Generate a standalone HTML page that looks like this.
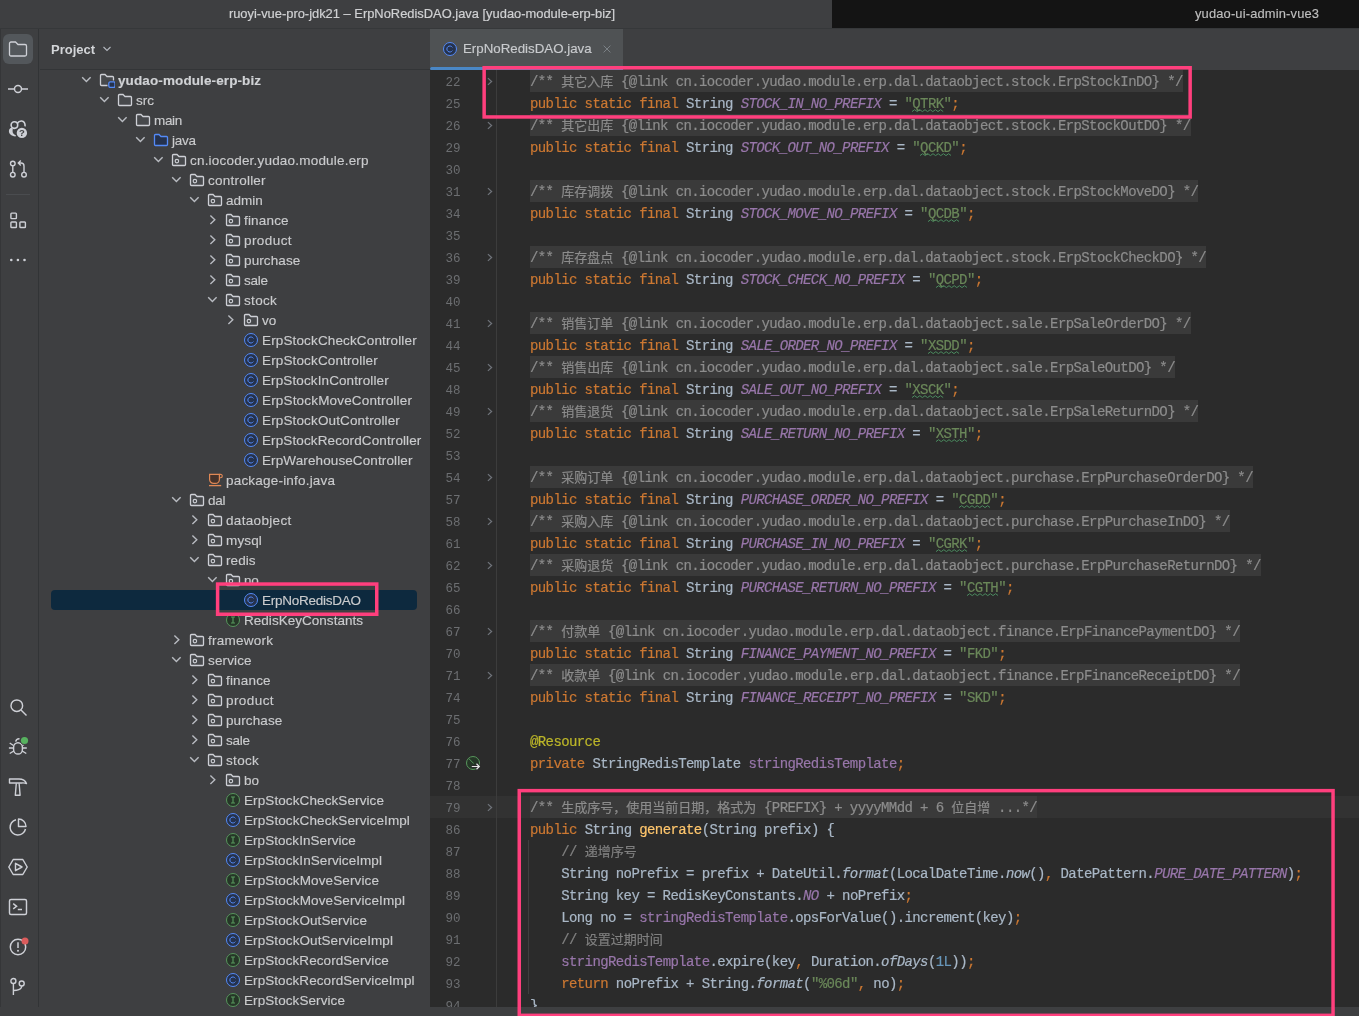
<!DOCTYPE html>
<html lang="zh">
<head>
<meta charset="utf-8">
<title>ruoyi-vue-pro-jdk21 – ErpNoRedisDAO.java</title>
<style>
html,body{margin:0;padding:0;}
body{width:1359px;height:1016px;overflow:hidden;background:#3e3f41;position:relative;
 font-family:"Liberation Sans","Noto Sans CJK SC",sans-serif;font-size:13px;color:#c3c5c8;}
#titlebar{position:absolute;left:0;top:0;width:1359px;height:28px;background:#3e3f41;border-bottom:1px solid #36383a;box-sizing:content-box;}
#t1{position:absolute;left:0;top:0;width:832px;height:28px;line-height:28px;text-align:center;color:#d0d1d3;font-size:12.9px;-webkit-text-stroke:0.2px;text-indent:12px;}
#t2{position:absolute;left:832px;top:0;width:527px;height:28px;line-height:28px;background:#141414;color:#bfbfbf;font-size:12.9px;letter-spacing:0.16px;-webkit-text-stroke:0.15px;}
#t2 span{position:absolute;left:363px;top:0;}
#strip{position:absolute;left:0;top:29px;width:38px;height:978px;background:#3e3f41;border-right:1px solid #323436;}
#strip .selbg{position:absolute;left:3px;top:5px;width:30px;height:30px;border-radius:6px;background:#53575b;}
#strip svg{position:absolute;left:8px;overflow:visible;}
#strip .sep{position:absolute;left:6px;top:165px;width:24px;height:1px;background:#4a4c4f;}
#proj{position:absolute;left:40px;top:29px;width:390px;height:978px;background:#3e3f41;overflow:hidden;}
#phead{position:absolute;left:0;top:0;width:390px;height:40px;border-bottom:1px solid #333537;}
#phead b{position:absolute;left:11px;top:1px;line-height:40px;font-size:13px;color:#d3d5d8;font-weight:bold;}
#phead svg{position:absolute;left:62px;top:15px;}
.row{position:absolute;left:0;width:390px;height:20px;}
#tree{will-change:transform;position:absolute;left:0;top:-29px;width:390px;height:1016px;}
.row.sel:before{content:"";position:absolute;left:11px;top:0;width:366px;height:20px;border-radius:4px;background:#0d293e;}
.row svg.ar{position:absolute;top:4px;}
.row svg.ic{position:absolute;top:2px;}
.row .tl{-webkit-text-stroke:0.15px;position:absolute;top:1px;line-height:20px;white-space:nowrap;color:#cacbcd;font-size:13.5px;}
.row .tl.b{font-weight:bold;color:#d0d2d5;}
#editor{position:absolute;left:430px;top:29px;width:929px;height:978px;background:#2b2b2b;overflow:hidden;}
#tabbar{position:absolute;left:0;top:0;width:929px;height:41px;background:#3e3f41;}
#tab{position:absolute;left:0;top:0;width:193px;height:38px;background:#4f5254;}
#tab .ul{position:absolute;left:0;top:38px;width:193px;border-radius:1.5px 0 0 1.5px;height:3px;background:#4a88c7;}
#tab span{position:absolute;left:33px;top:0;line-height:40px;color:#c9cbce;font-size:13.3px;-webkit-text-stroke:0.15px;}
#tab svg.ci{position:absolute;left:12px;top:12px;}
#tab svg.x{position:absolute;left:172.4px;top:15.1px;}
#gsep{position:absolute;left:66px;top:41px;width:1px;height:940px;background:#3c3c3c;}
#code{will-change:transform;position:absolute;left:0;top:-29px;width:929px;height:1016px;font-family:"Liberation Mono","Noto Sans CJK SC",monospace;font-size:14px;letter-spacing:-0.6px;color:#a9b7c6;}
.z{font-size:13px;letter-spacing:0;}
.ln{position:absolute;left:0;width:929px;height:22px;line-height:24px;white-space:pre;}
.ln.cur{background:#323232;}
.ln .no{position:absolute;left:0;top:0;width:30.5px;text-align:right;color:#6c6e71;font-size:12.5px;letter-spacing:0;line-height:26px;}
.ln .fa{position:absolute;left:56px;top:6px;}
.ln .gi{position:absolute;left:35px;top:3px;}
.ln .cd{position:absolute;left:100px;top:0;-webkit-text-stroke:0.2px;}
.k{color:#cc7832}.f{color:#9876aa;font-style:italic}.fi{color:#9876aa}.s{color:#6a8759}
.s u{text-decoration:none;position:relative;}
.s u svg.wv{position:absolute;left:0;top:13px;}
.fd{color:#8c8c8c;background:#3a3a3a;display:inline-block;height:22px;vertical-align:top;}
.c{color:#808080}.an{color:#bbb529}.m{color:#ffc66d}.n{color:#6897bb}
.ig{position:absolute;left:98px;top:840px;width:1px;height:154px;background:#3f3f3f;}
#bottom{position:absolute;left:0;top:1007px;width:1359px;height:9px;background:#3e3f41;}
#boxes{position:absolute;left:0;top:0;}
#t1,#t2 span,#phead b,#tab span,#strip svg{will-change:transform;}
#ledge{position:absolute;left:0;top:29px;width:1px;height:978px;background:#353638;}
</style>
</head>
<body>
<svg width="0" height="0" style="position:absolute">
<defs>
<path id="ao" d="M2.2 3.2 L6.4 7.6 L10.6 3.2" fill="none" stroke="#b8bbc1" stroke-width="1.4"/>
<path id="ac" d="M4.4 1.5 L8.8 5.7 L4.4 9.9" fill="none" stroke="#b8bbc1" stroke-width="1.4"/>
<g id="i-fld"><path d="M1.5 3.5 a1 1 0 0 1 1 -1 H6 L8 4.5 H13.5 a1 1 0 0 1 1 1 V12.5 a1 1 0 0 1 -1 1 H2.5 a1 1 0 0 1 -1 -1 Z" fill="#47494c" stroke="#ced0d6" stroke-width="1.3"/></g>
<g id="i-src"><path d="M1.5 3.5 a1 1 0 0 1 1 -1 H6 L8 4.5 H13.5 a1 1 0 0 1 1 1 V12.5 a1 1 0 0 1 -1 1 H2.5 a1 1 0 0 1 -1 -1 Z" fill="#25324d" stroke="#548af7" stroke-width="1.3"/></g>
<g id="i-pkg"><path d="M1.5 3.5 a1 1 0 0 1 1 -1 H6 L8 4.5 H13.5 a1 1 0 0 1 1 1 V12.5 a1 1 0 0 1 -1 1 H2.5 a1 1 0 0 1 -1 -1 Z" fill="#47494c" stroke="#ced0d6" stroke-width="1.3"/><circle cx="5.9" cy="9.1" r="1.75" fill="none" stroke="#ced0d6" stroke-width="1.15"/></g>
<g id="i-mod"><path d="M1.5 3.5 a1 1 0 0 1 1 -1 H6 L8 4.5 H13.5 a1 1 0 0 1 1 1 V12.5 a1 1 0 0 1 -1 1 H2.5 a1 1 0 0 1 -1 -1 Z" fill="#47494c" stroke="#ced0d6" stroke-width="1.3"/><rect x="8.5" y="8.5" width="8" height="7" fill="#3e3f41"/><rect x="9.800" y="9.900" width="6.200" height="5.500" rx="1.300" fill="#25324d" stroke="#548af7" stroke-width="1.3"/></g>
<g id="i-C"><circle cx="8" cy="8" r="6.5" fill="#25324d" stroke="#548af7" stroke-width="1"/><path d="M10.4 9.6 A3 3 0 1 1 10.4 6.4" fill="none" stroke="#548af7" stroke-width="1"/></g>
<g id="i-I"><circle cx="8" cy="8" r="6.5" fill="#253627" stroke="#57965c" stroke-width="1"/><path d="M6 5 H10 M6 11 H10 M8 5 V11" fill="none" stroke="#57965c" stroke-width="1.2"/></g>
<g id="i-java"><path d="M2.6 2.4 H12.4 V7.4 a4 4 0 0 1 -4 4 H6.6 a4 4 0 0 1 -4 -4 Z" fill="#45332b" stroke="#e08855" stroke-width="1.2"/><path d="M12.4 2.4 H13.6 a1.7 1.7 0 0 1 0 3.4 H12.6" fill="none" stroke="#e08855" stroke-width="1.1"/><path d="M2 13.6 H14.2" stroke="#e08855" stroke-width="1.3"/></g>
</defs>
</svg>

<div id="titlebar">
 <div id="t1">ruoyi-vue-pro-jdk21 – ErpNoRedisDAO.java [yudao-module-erp-biz]</div>
 <div id="t2"><span>yudao-ui-admin-vue3</span></div>
</div>

<div id="strip">
 <div class="selbg"></div>
 <!-- project folder -->
 <svg style="top:10px" width="20" height="20" viewBox="0 0 20 20"><path d="M1.5 4.5 a1.5 1.5 0 0 1 1.5 -1.5 H7.5 L10 5.5 H17 a1.5 1.5 0 0 1 1.500 1.5 V15.500 a1.500 1.500 0 0 1 -1.500 1.500 H3 a1.500 1.500 0 0 1 -1.500 -1.500 Z" fill="none" stroke="#ced0d6" stroke-width="1.3"/></svg>
 <!-- commit -->
 <svg style="top:50px" width="20" height="20" viewBox="0 0 20 20"><path d="M0 10 H6.400 M13.600 10 H20" stroke="#ced0d6" stroke-width="1.45"/><circle cx="10" cy="10" r="3.500" fill="none" stroke="#ced0d6" stroke-width="1.45"/></svg>
 <!-- copilot-ish -->
 <svg style="top:90px" width="22" height="22" viewBox="0 0 22 22"><circle cx="6.4" cy="6.1" r="3.3" fill="none" stroke="#ced0d6" stroke-width="1.6"/><path d="M9.4 4.2 C10.5 2.5 12.2 1.9 13.6 2 C16 2.200 17.2 4.3 17.1 7.4" fill="none" stroke="#ced0d6" stroke-width="1.6"/><path d="M3.4 8.6 C-0.6 10.5 -0.2 16.3 7.6 17.6 L7.9 16.2 C4.7 15.2 4.2 13 4.8 9.9 Z" fill="#ced0d6"/><circle cx="13.9" cy="13.9" r="5.9" fill="#3e3f41"/><circle cx="13.9" cy="13.9" r="5.2" fill="#ced0d6"/><text x="13.9" y="17.3" font-family="Liberation Sans,sans-serif" font-weight="bold" font-size="9.5" text-anchor="middle" fill="#3e3f41">?</text></svg>
 <!-- pull requests -->
 <svg style="top:130px" width="20" height="20" viewBox="0 0 20 20"><circle cx="4.800" cy="4.500" r="2.300" fill="none" stroke="#ced0d6" stroke-width="1.4"/><circle cx="4.800" cy="15.700" r="2.300" fill="none" stroke="#ced0d6" stroke-width="1.4"/><circle cx="16" cy="15.700" r="2.300" fill="none" stroke="#ced0d6" stroke-width="1.4"/><path d="M4.800 6.800 V13.400 M16 13.400 V7 a3 3 0 0 0 -3 -3 H10.500 M12.800 1.500 L10.300 4 L12.800 6.500" fill="none" stroke="#ced0d6" stroke-width="1.4"/></svg>
 <div class="sep"></div>
 <!-- structure -->
 <svg style="top:181px" width="20" height="20" viewBox="0 0 20 20"><rect x="2.900" y="3.100" width="5.500" height="5.500" rx="0.800" fill="none" stroke="#ced0d6" stroke-width="1.4"/><rect x="2.900" y="12" width="5.500" height="5.500" rx="0.800" fill="none" stroke="#ced0d6" stroke-width="1.4"/><rect x="11.900" y="12" width="5.500" height="5.500" rx="0.800" fill="none" stroke="#ced0d6" stroke-width="1.4"/></svg>
 <!-- more -->
 <svg style="top:221px" width="20" height="20" viewBox="0 0 20 20"><circle cx="3.300" cy="10" r="1.300" fill="#ced0d6"/><circle cx="9.900" cy="10" r="1.300" fill="#ced0d6"/><circle cx="16.500" cy="10" r="1.300" fill="#ced0d6"/></svg>
 <!-- search -->
 <svg style="top:668px" width="20" height="20" viewBox="0 0 20 20"><circle cx="8.800" cy="8.700" r="5.800" fill="none" stroke="#ced0d6" stroke-width="1.45"/><path d="M13 13 L18.500 18.500" stroke="#ced0d6" stroke-width="1.45"/></svg>
 <!-- debug -->
 <svg style="top:708px" width="20" height="20" viewBox="0 0 20 20"><path d="M5.600 10.200 a4.400 4.400 0 0 1 8.800 0 V12.700 a4.400 4.400 0 0 1 -8.800 0 Z" fill="none" stroke="#ced0d6" stroke-width="1.45"/><path d="M7.700 4.700 a3.600 3.600 0 0 1 3.800 -2.900" fill="none" stroke="#ced0d6" stroke-width="1.45"/><path d="M0.900 10.900 H5.300 M14.700 10.900 H18.800 M1.700 6 L5.500 8.500 M1.700 16.500 L5.800 14 M18.300 16.500 L14.200 14 M18 6.200 L14.500 8.500" stroke="#ced0d6" stroke-width="1.45" fill="none"/><circle cx="16.500" cy="3.500" r="4.500" fill="#3e3f41"/><circle cx="16.500" cy="3.500" r="3.600" fill="#57b25f"/></svg>
 <!-- build hammer -->
 <svg style="top:748px" width="20" height="20" viewBox="0 0 20 20"><path d="M1.500 2 H11 C14.800 2 17.400 3.800 18.500 6.600 C16.400 5.500 14.600 6 12.400 6 H1.500 Z" fill="none" stroke="#ced0d6" stroke-width="1.4" stroke-linejoin="round"/><path d="M8.300 6.200 L7.300 18.200 H12.100 L11.100 6.200" fill="none" stroke="#ced0d6" stroke-width="1.4" stroke-linejoin="round"/></svg>
 <!-- profiler pie -->
 <svg style="top:788px" width="20" height="20" viewBox="0 0 20 20"><path d="M8 2.700 A7.800 7.800 0 1 0 17.500 12 " fill="none" stroke="#ced0d6" stroke-width="1.45"/><path d="M10.500 2 A7.500 7.500 0 0 1 18 9.500 H10.500 Z" fill="none" stroke="#ced0d6" stroke-width="1.45" stroke-linejoin="round"/></svg>
 <!-- services -->
 <svg style="top:828px" width="20" height="20" viewBox="0 0 20 20"><path d="M5.200 2.500 H14.800 L19.200 10 L14.800 17.500 H5.200 L0.800 10 Z" fill="none" stroke="#ced0d6" stroke-width="1.45" stroke-linejoin="round"/><path d="M7.500 6.300 L14 10 L7.500 13.700 Z" fill="none" stroke="#ced0d6" stroke-width="1.45" stroke-linejoin="round"/></svg>
 <!-- terminal -->
 <svg style="top:868px" width="20" height="20" viewBox="0 0 20 20"><rect x="1.500" y="2.500" width="17" height="15" rx="1.500" fill="none" stroke="#ced0d6" stroke-width="1.45"/><path d="M5.200 6.700 L8.600 9.300 L5.200 11.900 M9.800 12.500 H14" fill="none" stroke="#ced0d6" stroke-width="1.45"/></svg>
 <!-- problems -->
 <svg style="top:908px" width="20" height="20" viewBox="0 0 20 20"><circle cx="10" cy="10" r="7.700" fill="none" stroke="#ced0d6" stroke-width="1.45"/><path d="M10 5.300 V11" stroke="#ced0d6" stroke-width="1.500"/><circle cx="10" cy="13.800" r="1" fill="#ced0d6"/><circle cx="17" cy="4" r="3.500" fill="#db5c5c"/></svg>
 <!-- git -->
 <svg style="top:948px" width="20" height="20" viewBox="0 0 20 20"><circle cx="5.400" cy="4" r="2.500" fill="none" stroke="#ced0d6" stroke-width="1.4"/><circle cx="13.700" cy="6.500" r="2.500" fill="none" stroke="#ced0d6" stroke-width="1.4"/><path d="M5.400 6.500 V18 M13.700 9 C13.700 12.500 9 13.500 5.400 13.500" fill="none" stroke="#ced0d6" stroke-width="1.4"/></svg>
</div>

<div id="proj">
 <div id="tree">
<div class="row" style="top:70px"><svg class="ar" style="left:40px" width="12" height="12" viewBox="0 0 12 12"><use href="#ao"/></svg><svg class="ic" style="left:59px" width="16" height="16" viewBox="0 0 16 16"><use href="#i-mod"/></svg><span class="tl b" style="left:78px;letter-spacing:0.11px">yudao-module-erp-biz</span></div>
<div class="row" style="top:90px"><svg class="ar" style="left:58px" width="12" height="12" viewBox="0 0 12 12"><use href="#ao"/></svg><svg class="ic" style="left:77px" width="16" height="16" viewBox="0 0 16 16"><use href="#i-fld"/></svg><span class="tl" style="left:96px;letter-spacing:0.00px">src</span></div>
<div class="row" style="top:110px"><svg class="ar" style="left:76px" width="12" height="12" viewBox="0 0 12 12"><use href="#ao"/></svg><svg class="ic" style="left:95px" width="16" height="16" viewBox="0 0 16 16"><use href="#i-fld"/></svg><span class="tl" style="left:114px;letter-spacing:-0.32px">main</span></div>
<div class="row" style="top:130px"><svg class="ar" style="left:94px" width="12" height="12" viewBox="0 0 12 12"><use href="#ao"/></svg><svg class="ic" style="left:113px" width="16" height="16" viewBox="0 0 16 16"><use href="#i-src"/></svg><span class="tl" style="left:132px;letter-spacing:-0.26px">java</span></div>
<div class="row" style="top:150px"><svg class="ar" style="left:112px" width="12" height="12" viewBox="0 0 12 12"><use href="#ao"/></svg><svg class="ic" style="left:131px" width="16" height="16" viewBox="0 0 16 16"><use href="#i-pkg"/></svg><span class="tl" style="left:150px;letter-spacing:0.20px">cn.iocoder.yudao.module.erp</span></div>
<div class="row" style="top:170px"><svg class="ar" style="left:130px" width="12" height="12" viewBox="0 0 12 12"><use href="#ao"/></svg><svg class="ic" style="left:149px" width="16" height="16" viewBox="0 0 16 16"><use href="#i-pkg"/></svg><span class="tl" style="left:168px;letter-spacing:0.23px">controller</span></div>
<div class="row" style="top:190px"><svg class="ar" style="left:148px" width="12" height="12" viewBox="0 0 12 12"><use href="#ao"/></svg><svg class="ic" style="left:167px" width="16" height="16" viewBox="0 0 16 16"><use href="#i-pkg"/></svg><span class="tl" style="left:186px;letter-spacing:0.01px">admin</span></div>
<div class="row" style="top:210px"><svg class="ar" style="left:166px" width="12" height="12" viewBox="0 0 12 12"><use href="#ac"/></svg><svg class="ic" style="left:185px" width="16" height="16" viewBox="0 0 16 16"><use href="#i-pkg"/></svg><span class="tl" style="left:204px;letter-spacing:0.18px">finance</span></div>
<div class="row" style="top:230px"><svg class="ar" style="left:166px" width="12" height="12" viewBox="0 0 12 12"><use href="#ac"/></svg><svg class="ic" style="left:185px" width="16" height="16" viewBox="0 0 16 16"><use href="#i-pkg"/></svg><span class="tl" style="left:204px;letter-spacing:0.43px">product</span></div>
<div class="row" style="top:250px"><svg class="ar" style="left:166px" width="12" height="12" viewBox="0 0 12 12"><use href="#ac"/></svg><svg class="ic" style="left:185px" width="16" height="16" viewBox="0 0 16 16"><use href="#i-pkg"/></svg><span class="tl" style="left:204px;letter-spacing:0.12px">purchase</span></div>
<div class="row" style="top:270px"><svg class="ar" style="left:166px" width="12" height="12" viewBox="0 0 12 12"><use href="#ac"/></svg><svg class="ic" style="left:185px" width="16" height="16" viewBox="0 0 16 16"><use href="#i-pkg"/></svg><span class="tl" style="left:204px;letter-spacing:-0.22px">sale</span></div>
<div class="row" style="top:290px"><svg class="ar" style="left:166px" width="12" height="12" viewBox="0 0 12 12"><use href="#ao"/></svg><svg class="ic" style="left:185px" width="16" height="16" viewBox="0 0 16 16"><use href="#i-pkg"/></svg><span class="tl" style="left:204px;letter-spacing:0.32px">stock</span></div>
<div class="row" style="top:310px"><svg class="ar" style="left:184px" width="12" height="12" viewBox="0 0 12 12"><use href="#ac"/></svg><svg class="ic" style="left:203px" width="16" height="16" viewBox="0 0 16 16"><use href="#i-pkg"/></svg><span class="tl" style="left:222px;letter-spacing:0.03px">vo</span></div>
<div class="row" style="top:330px"><svg class="ic" style="left:203px" width="16" height="16" viewBox="0 0 16 16"><use href="#i-C"/></svg><span class="tl" style="left:222px;letter-spacing:0.14px">ErpStockCheckController</span></div>
<div class="row" style="top:350px"><svg class="ic" style="left:203px" width="16" height="16" viewBox="0 0 16 16"><use href="#i-C"/></svg><span class="tl" style="left:222px;letter-spacing:0.14px">ErpStockController</span></div>
<div class="row" style="top:370px"><svg class="ic" style="left:203px" width="16" height="16" viewBox="0 0 16 16"><use href="#i-C"/></svg><span class="tl" style="left:222px;letter-spacing:0.11px">ErpStockInController</span></div>
<div class="row" style="top:390px"><svg class="ic" style="left:203px" width="16" height="16" viewBox="0 0 16 16"><use href="#i-C"/></svg><span class="tl" style="left:222px;letter-spacing:0.17px">ErpStockMoveController</span></div>
<div class="row" style="top:410px"><svg class="ic" style="left:203px" width="16" height="16" viewBox="0 0 16 16"><use href="#i-C"/></svg><span class="tl" style="left:222px;letter-spacing:0.14px">ErpStockOutController</span></div>
<div class="row" style="top:430px"><svg class="ic" style="left:203px" width="16" height="16" viewBox="0 0 16 16"><use href="#i-C"/></svg><span class="tl" style="left:222px;letter-spacing:0.11px">ErpStockRecordController</span></div>
<div class="row" style="top:450px"><svg class="ic" style="left:203px" width="16" height="16" viewBox="0 0 16 16"><use href="#i-C"/></svg><span class="tl" style="left:222px;letter-spacing:0.11px">ErpWarehouseController</span></div>
<div class="row" style="top:470px"><svg class="ic" style="left:167px" width="16" height="16" viewBox="0 0 16 16"><use href="#i-java"/></svg><span class="tl" style="left:186px;letter-spacing:0.20px">package-info.java</span></div>
<div class="row" style="top:490px"><svg class="ar" style="left:130px" width="12" height="12" viewBox="0 0 12 12"><use href="#ao"/></svg><svg class="ic" style="left:149px" width="16" height="16" viewBox="0 0 16 16"><use href="#i-pkg"/></svg><span class="tl" style="left:168px;letter-spacing:-0.26px">dal</span></div>
<div class="row" style="top:510px"><svg class="ar" style="left:148px" width="12" height="12" viewBox="0 0 12 12"><use href="#ac"/></svg><svg class="ic" style="left:167px" width="16" height="16" viewBox="0 0 16 16"><use href="#i-pkg"/></svg><span class="tl" style="left:186px;letter-spacing:0.33px">dataobject</span></div>
<div class="row" style="top:530px"><svg class="ar" style="left:148px" width="12" height="12" viewBox="0 0 12 12"><use href="#ac"/></svg><svg class="ic" style="left:167px" width="16" height="16" viewBox="0 0 16 16"><use href="#i-pkg"/></svg><span class="tl" style="left:186px;letter-spacing:0.13px">mysql</span></div>
<div class="row" style="top:550px"><svg class="ar" style="left:148px" width="12" height="12" viewBox="0 0 12 12"><use href="#ao"/></svg><svg class="ic" style="left:167px" width="16" height="16" viewBox="0 0 16 16"><use href="#i-pkg"/></svg><span class="tl" style="left:186px;letter-spacing:0.08px">redis</span></div>
<div class="row" style="top:570px"><svg class="ar" style="left:166px" width="12" height="12" viewBox="0 0 12 12"><use href="#ao"/></svg><svg class="ic" style="left:185px" width="16" height="16" viewBox="0 0 16 16"><use href="#i-pkg"/></svg><span class="tl" style="left:204px;letter-spacing:-0.23px">no</span></div>
<div class="row sel" style="top:590px"><svg class="ic" style="left:203px" width="16" height="16" viewBox="0 0 16 16"><use href="#i-C"/></svg><span class="tl" style="left:222px;letter-spacing:-0.25px">ErpNoRedisDAO</span></div>
<div class="row" style="top:610px"><svg class="ic" style="left:185px" width="16" height="16" viewBox="0 0 16 16"><use href="#i-I"/></svg><span class="tl" style="left:204px;letter-spacing:0.03px">RedisKeyConstants</span></div>
<div class="row" style="top:630px"><svg class="ar" style="left:130px" width="12" height="12" viewBox="0 0 12 12"><use href="#ac"/></svg><svg class="ic" style="left:149px" width="16" height="16" viewBox="0 0 16 16"><use href="#i-pkg"/></svg><span class="tl" style="left:168px;letter-spacing:0.26px">framework</span></div>
<div class="row" style="top:650px"><svg class="ar" style="left:130px" width="12" height="12" viewBox="0 0 12 12"><use href="#ao"/></svg><svg class="ic" style="left:149px" width="16" height="16" viewBox="0 0 16 16"><use href="#i-pkg"/></svg><span class="tl" style="left:168px;letter-spacing:0.14px">service</span></div>
<div class="row" style="top:670px"><svg class="ar" style="left:148px" width="12" height="12" viewBox="0 0 12 12"><use href="#ac"/></svg><svg class="ic" style="left:167px" width="16" height="16" viewBox="0 0 16 16"><use href="#i-pkg"/></svg><span class="tl" style="left:186px;letter-spacing:0.18px">finance</span></div>
<div class="row" style="top:690px"><svg class="ar" style="left:148px" width="12" height="12" viewBox="0 0 12 12"><use href="#ac"/></svg><svg class="ic" style="left:167px" width="16" height="16" viewBox="0 0 16 16"><use href="#i-pkg"/></svg><span class="tl" style="left:186px;letter-spacing:0.43px">product</span></div>
<div class="row" style="top:710px"><svg class="ar" style="left:148px" width="12" height="12" viewBox="0 0 12 12"><use href="#ac"/></svg><svg class="ic" style="left:167px" width="16" height="16" viewBox="0 0 16 16"><use href="#i-pkg"/></svg><span class="tl" style="left:186px;letter-spacing:0.11px">purchase</span></div>
<div class="row" style="top:730px"><svg class="ar" style="left:148px" width="12" height="12" viewBox="0 0 12 12"><use href="#ac"/></svg><svg class="ic" style="left:167px" width="16" height="16" viewBox="0 0 16 16"><use href="#i-pkg"/></svg><span class="tl" style="left:186px;letter-spacing:-0.22px">sale</span></div>
<div class="row" style="top:750px"><svg class="ar" style="left:148px" width="12" height="12" viewBox="0 0 12 12"><use href="#ao"/></svg><svg class="ic" style="left:167px" width="16" height="16" viewBox="0 0 16 16"><use href="#i-pkg"/></svg><span class="tl" style="left:186px;letter-spacing:0.32px">stock</span></div>
<div class="row" style="top:770px"><svg class="ar" style="left:166px" width="12" height="12" viewBox="0 0 12 12"><use href="#ac"/></svg><svg class="ic" style="left:185px" width="16" height="16" viewBox="0 0 16 16"><use href="#i-pkg"/></svg><span class="tl" style="left:204px;letter-spacing:0.07px">bo</span></div>
<div class="row" style="top:790px"><svg class="ic" style="left:185px" width="16" height="16" viewBox="0 0 16 16"><use href="#i-I"/></svg><span class="tl" style="left:204px;letter-spacing:0.10px">ErpStockCheckService</span></div>
<div class="row" style="top:810px"><svg class="ic" style="left:185px" width="16" height="16" viewBox="0 0 16 16"><use href="#i-C"/></svg><span class="tl" style="left:204px;letter-spacing:0.10px">ErpStockCheckServiceImpl</span></div>
<div class="row" style="top:830px"><svg class="ic" style="left:185px" width="16" height="16" viewBox="0 0 16 16"><use href="#i-I"/></svg><span class="tl" style="left:204px;letter-spacing:0.05px">ErpStockInService</span></div>
<div class="row" style="top:850px"><svg class="ic" style="left:185px" width="16" height="16" viewBox="0 0 16 16"><use href="#i-C"/></svg><span class="tl" style="left:204px;letter-spacing:0.07px">ErpStockInServiceImpl</span></div>
<div class="row" style="top:870px"><svg class="ic" style="left:185px" width="16" height="16" viewBox="0 0 16 16"><use href="#i-I"/></svg><span class="tl" style="left:204px;letter-spacing:0.12px">ErpStockMoveService</span></div>
<div class="row" style="top:890px"><svg class="ic" style="left:185px" width="16" height="16" viewBox="0 0 16 16"><use href="#i-C"/></svg><span class="tl" style="left:204px;letter-spacing:0.12px">ErpStockMoveServiceImpl</span></div>
<div class="row" style="top:910px"><svg class="ic" style="left:185px" width="16" height="16" viewBox="0 0 16 16"><use href="#i-I"/></svg><span class="tl" style="left:204px;letter-spacing:0.08px">ErpStockOutService</span></div>
<div class="row" style="top:930px"><svg class="ic" style="left:185px" width="16" height="16" viewBox="0 0 16 16"><use href="#i-C"/></svg><span class="tl" style="left:204px;letter-spacing:0.09px">ErpStockOutServiceImpl</span></div>
<div class="row" style="top:950px"><svg class="ic" style="left:185px" width="16" height="16" viewBox="0 0 16 16"><use href="#i-I"/></svg><span class="tl" style="left:204px;letter-spacing:0.07px">ErpStockRecordService</span></div>
<div class="row" style="top:970px"><svg class="ic" style="left:185px" width="16" height="16" viewBox="0 0 16 16"><use href="#i-C"/></svg><span class="tl" style="left:204px;letter-spacing:0.07px">ErpStockRecordServiceImpl</span></div>
<div class="row" style="top:990px"><svg class="ic" style="left:185px" width="16" height="16" viewBox="0 0 16 16"><use href="#i-I"/></svg><span class="tl" style="left:204px;letter-spacing:0.08px">ErpStockService</span></div>
 </div>
 <div id="phead"><b>Project</b><svg width="10" height="10" viewBox="0 0 10 10"><path d="M1.500 3 L5 6.500 L8.500 3" fill="none" stroke="#b4b8bf" stroke-width="1.100"/></svg></div>
</div>

<div id="editor">
 <div id="code">
<div class="ln" style="top:70px"><span class="no">22</span><svg class="fa" width="8" height="10" viewBox="0 0 8 10"><path d="M1.9 2.1 L5.6 5.5 L1.9 8.9" fill="none" stroke="#70747b" stroke-width="1.25"/></svg><span class="cd"><span class="fd">/** <span class="z">其它入库</span> {@link cn.iocoder.yudao.module.erp.dal.dataobject.stock.ErpStockInDO} */</span></span></div>
<div class="ln" style="top:92px"><span class="no">25</span><span class="cd"><span class="k">public static final </span>String <span class="f">STOCK_IN_NO_PREFIX</span> = <span class="s">"<u>QTRK<svg class="wv" width="31.2" height="4" viewBox="0 0 31.2 4"><polyline points="0.0 2.6 2.6 0.7 5.2 2.6 7.8 0.7 10.4 2.6 13.0 0.7 15.6 2.6 18.2 0.7 20.8 2.6 23.4 0.7 26.0 2.6 28.6 0.7 31.2 2.6" fill="none" stroke="#4b8c5f" stroke-width="1" stroke-linejoin="round"/></svg></u>"</span><span class="k">;</span></span></div>
<div class="ln" style="top:114px"><span class="no">26</span><svg class="fa" width="8" height="10" viewBox="0 0 8 10"><path d="M1.9 2.1 L5.6 5.5 L1.9 8.9" fill="none" stroke="#70747b" stroke-width="1.25"/></svg><span class="cd"><span class="fd">/** <span class="z">其它出库</span> {@link cn.iocoder.yudao.module.erp.dal.dataobject.stock.ErpStockOutDO} */</span></span></div>
<div class="ln" style="top:136px"><span class="no">29</span><span class="cd"><span class="k">public static final </span>String <span class="f">STOCK_OUT_NO_PREFIX</span> = <span class="s">"<u>QCKD<svg class="wv" width="31.2" height="4" viewBox="0 0 31.2 4"><polyline points="0.0 2.6 2.6 0.7 5.2 2.6 7.8 0.7 10.4 2.6 13.0 0.7 15.6 2.6 18.2 0.7 20.8 2.6 23.4 0.7 26.0 2.6 28.6 0.7 31.2 2.6" fill="none" stroke="#4b8c5f" stroke-width="1" stroke-linejoin="round"/></svg></u>"</span><span class="k">;</span></span></div>
<div class="ln" style="top:158px"><span class="no">30</span><span class="cd"></span></div>
<div class="ln" style="top:180px"><span class="no">31</span><svg class="fa" width="8" height="10" viewBox="0 0 8 10"><path d="M1.9 2.1 L5.6 5.5 L1.9 8.9" fill="none" stroke="#70747b" stroke-width="1.25"/></svg><span class="cd"><span class="fd">/** <span class="z">库存调拨</span> {@link cn.iocoder.yudao.module.erp.dal.dataobject.stock.ErpStockMoveDO} */</span></span></div>
<div class="ln" style="top:202px"><span class="no">34</span><span class="cd"><span class="k">public static final </span>String <span class="f">STOCK_MOVE_NO_PREFIX</span> = <span class="s">"<u>QCDB<svg class="wv" width="31.2" height="4" viewBox="0 0 31.2 4"><polyline points="0.0 2.6 2.6 0.7 5.2 2.6 7.8 0.7 10.4 2.6 13.0 0.7 15.6 2.6 18.2 0.7 20.8 2.6 23.4 0.7 26.0 2.6 28.6 0.7 31.2 2.6" fill="none" stroke="#4b8c5f" stroke-width="1" stroke-linejoin="round"/></svg></u>"</span><span class="k">;</span></span></div>
<div class="ln" style="top:224px"><span class="no">35</span><span class="cd"></span></div>
<div class="ln" style="top:246px"><span class="no">36</span><svg class="fa" width="8" height="10" viewBox="0 0 8 10"><path d="M1.9 2.1 L5.6 5.5 L1.9 8.9" fill="none" stroke="#70747b" stroke-width="1.25"/></svg><span class="cd"><span class="fd">/** <span class="z">库存盘点</span> {@link cn.iocoder.yudao.module.erp.dal.dataobject.stock.ErpStockCheckDO} */</span></span></div>
<div class="ln" style="top:268px"><span class="no">39</span><span class="cd"><span class="k">public static final </span>String <span class="f">STOCK_CHECK_NO_PREFIX</span> = <span class="s">"<u>QCPD<svg class="wv" width="31.2" height="4" viewBox="0 0 31.2 4"><polyline points="0.0 2.6 2.6 0.7 5.2 2.6 7.8 0.7 10.4 2.6 13.0 0.7 15.6 2.6 18.2 0.7 20.8 2.6 23.4 0.7 26.0 2.6 28.6 0.7 31.2 2.6" fill="none" stroke="#4b8c5f" stroke-width="1" stroke-linejoin="round"/></svg></u>"</span><span class="k">;</span></span></div>
<div class="ln" style="top:290px"><span class="no">40</span><span class="cd"></span></div>
<div class="ln" style="top:312px"><span class="no">41</span><svg class="fa" width="8" height="10" viewBox="0 0 8 10"><path d="M1.9 2.1 L5.6 5.5 L1.9 8.9" fill="none" stroke="#70747b" stroke-width="1.25"/></svg><span class="cd"><span class="fd">/** <span class="z">销售订单</span> {@link cn.iocoder.yudao.module.erp.dal.dataobject.sale.ErpSaleOrderDO} */</span></span></div>
<div class="ln" style="top:334px"><span class="no">44</span><span class="cd"><span class="k">public static final </span>String <span class="f">SALE_ORDER_NO_PREFIX</span> = <span class="s">"<u>XSDD<svg class="wv" width="31.2" height="4" viewBox="0 0 31.2 4"><polyline points="0.0 2.6 2.6 0.7 5.2 2.6 7.8 0.7 10.4 2.6 13.0 0.7 15.6 2.6 18.2 0.7 20.8 2.6 23.4 0.7 26.0 2.6 28.6 0.7 31.2 2.6" fill="none" stroke="#4b8c5f" stroke-width="1" stroke-linejoin="round"/></svg></u>"</span><span class="k">;</span></span></div>
<div class="ln" style="top:356px"><span class="no">45</span><svg class="fa" width="8" height="10" viewBox="0 0 8 10"><path d="M1.9 2.1 L5.6 5.5 L1.9 8.9" fill="none" stroke="#70747b" stroke-width="1.25"/></svg><span class="cd"><span class="fd">/** <span class="z">销售出库</span> {@link cn.iocoder.yudao.module.erp.dal.dataobject.sale.ErpSaleOutDO} */</span></span></div>
<div class="ln" style="top:378px"><span class="no">48</span><span class="cd"><span class="k">public static final </span>String <span class="f">SALE_OUT_NO_PREFIX</span> = <span class="s">"<u>XSCK<svg class="wv" width="31.2" height="4" viewBox="0 0 31.2 4"><polyline points="0.0 2.6 2.6 0.7 5.2 2.6 7.8 0.7 10.4 2.6 13.0 0.7 15.6 2.6 18.2 0.7 20.8 2.6 23.4 0.7 26.0 2.6 28.6 0.7 31.2 2.6" fill="none" stroke="#4b8c5f" stroke-width="1" stroke-linejoin="round"/></svg></u>"</span><span class="k">;</span></span></div>
<div class="ln" style="top:400px"><span class="no">49</span><svg class="fa" width="8" height="10" viewBox="0 0 8 10"><path d="M1.9 2.1 L5.6 5.5 L1.9 8.9" fill="none" stroke="#70747b" stroke-width="1.25"/></svg><span class="cd"><span class="fd">/** <span class="z">销售退货</span> {@link cn.iocoder.yudao.module.erp.dal.dataobject.sale.ErpSaleReturnDO} */</span></span></div>
<div class="ln" style="top:422px"><span class="no">52</span><span class="cd"><span class="k">public static final </span>String <span class="f">SALE_RETURN_NO_PREFIX</span> = <span class="s">"<u>XSTH<svg class="wv" width="31.2" height="4" viewBox="0 0 31.2 4"><polyline points="0.0 2.6 2.6 0.7 5.2 2.6 7.8 0.7 10.4 2.6 13.0 0.7 15.6 2.6 18.2 0.7 20.8 2.6 23.4 0.7 26.0 2.6 28.6 0.7 31.2 2.6" fill="none" stroke="#4b8c5f" stroke-width="1" stroke-linejoin="round"/></svg></u>"</span><span class="k">;</span></span></div>
<div class="ln" style="top:444px"><span class="no">53</span><span class="cd"></span></div>
<div class="ln" style="top:466px"><span class="no">54</span><svg class="fa" width="8" height="10" viewBox="0 0 8 10"><path d="M1.9 2.1 L5.6 5.5 L1.9 8.9" fill="none" stroke="#70747b" stroke-width="1.25"/></svg><span class="cd"><span class="fd">/** <span class="z">采购订单</span> {@link cn.iocoder.yudao.module.erp.dal.dataobject.purchase.ErpPurchaseOrderDO} */</span></span></div>
<div class="ln" style="top:488px"><span class="no">57</span><span class="cd"><span class="k">public static final </span>String <span class="f">PURCHASE_ORDER_NO_PREFIX</span> = <span class="s">"<u>CGDD<svg class="wv" width="31.2" height="4" viewBox="0 0 31.2 4"><polyline points="0.0 2.6 2.6 0.7 5.2 2.6 7.8 0.7 10.4 2.6 13.0 0.7 15.6 2.6 18.2 0.7 20.8 2.6 23.4 0.7 26.0 2.6 28.6 0.7 31.2 2.6" fill="none" stroke="#4b8c5f" stroke-width="1" stroke-linejoin="round"/></svg></u>"</span><span class="k">;</span></span></div>
<div class="ln" style="top:510px"><span class="no">58</span><svg class="fa" width="8" height="10" viewBox="0 0 8 10"><path d="M1.9 2.1 L5.6 5.5 L1.9 8.9" fill="none" stroke="#70747b" stroke-width="1.25"/></svg><span class="cd"><span class="fd">/** <span class="z">采购入库</span> {@link cn.iocoder.yudao.module.erp.dal.dataobject.purchase.ErpPurchaseInDO} */</span></span></div>
<div class="ln" style="top:532px"><span class="no">61</span><span class="cd"><span class="k">public static final </span>String <span class="f">PURCHASE_IN_NO_PREFIX</span> = <span class="s">"<u>CGRK<svg class="wv" width="31.2" height="4" viewBox="0 0 31.2 4"><polyline points="0.0 2.6 2.6 0.7 5.2 2.6 7.8 0.7 10.4 2.6 13.0 0.7 15.6 2.6 18.2 0.7 20.8 2.6 23.4 0.7 26.0 2.6 28.6 0.7 31.2 2.6" fill="none" stroke="#4b8c5f" stroke-width="1" stroke-linejoin="round"/></svg></u>"</span><span class="k">;</span></span></div>
<div class="ln" style="top:554px"><span class="no">62</span><svg class="fa" width="8" height="10" viewBox="0 0 8 10"><path d="M1.9 2.1 L5.6 5.5 L1.9 8.9" fill="none" stroke="#70747b" stroke-width="1.25"/></svg><span class="cd"><span class="fd">/** <span class="z">采购退货</span> {@link cn.iocoder.yudao.module.erp.dal.dataobject.purchase.ErpPurchaseReturnDO} */</span></span></div>
<div class="ln" style="top:576px"><span class="no">65</span><span class="cd"><span class="k">public static final </span>String <span class="f">PURCHASE_RETURN_NO_PREFIX</span> = <span class="s">"<u>CGTH<svg class="wv" width="31.2" height="4" viewBox="0 0 31.2 4"><polyline points="0.0 2.6 2.6 0.7 5.2 2.6 7.8 0.7 10.4 2.6 13.0 0.7 15.6 2.6 18.2 0.7 20.8 2.6 23.4 0.7 26.0 2.6 28.6 0.7 31.2 2.6" fill="none" stroke="#4b8c5f" stroke-width="1" stroke-linejoin="round"/></svg></u>"</span><span class="k">;</span></span></div>
<div class="ln" style="top:598px"><span class="no">66</span><span class="cd"></span></div>
<div class="ln" style="top:620px"><span class="no">67</span><svg class="fa" width="8" height="10" viewBox="0 0 8 10"><path d="M1.9 2.1 L5.6 5.5 L1.9 8.9" fill="none" stroke="#70747b" stroke-width="1.25"/></svg><span class="cd"><span class="fd">/** <span class="z">付款单</span> {@link cn.iocoder.yudao.module.erp.dal.dataobject.finance.ErpFinancePaymentDO} */</span></span></div>
<div class="ln" style="top:642px"><span class="no">70</span><span class="cd"><span class="k">public static final </span>String <span class="f">FINANCE_PAYMENT_NO_PREFIX</span> = <span class="s">"FKD"</span><span class="k">;</span></span></div>
<div class="ln" style="top:664px"><span class="no">71</span><svg class="fa" width="8" height="10" viewBox="0 0 8 10"><path d="M1.9 2.1 L5.6 5.5 L1.9 8.9" fill="none" stroke="#70747b" stroke-width="1.25"/></svg><span class="cd"><span class="fd">/** <span class="z">收款单</span> {@link cn.iocoder.yudao.module.erp.dal.dataobject.finance.ErpFinanceReceiptDO} */</span></span></div>
<div class="ln" style="top:686px"><span class="no">74</span><span class="cd"><span class="k">public static final </span>String <span class="f">FINANCE_RECEIPT_NO_PREFIX</span> = <span class="s">"SKD"</span><span class="k">;</span></span></div>
<div class="ln" style="top:708px"><span class="no">75</span><span class="cd"></span></div>
<div class="ln" style="top:730px"><span class="no">76</span><span class="cd"><span class="an">@Resource</span></span></div>
<div class="ln" style="top:752px"><span class="no">77</span><svg class="gi" width="18" height="18" viewBox="0 0 18 18"><circle cx="8" cy="8" r="6.5" fill="#253627" stroke="#57965c" stroke-width="1"/><path d="M3.6 3.4 L8.6 8.4" stroke="#57965c" stroke-width="1" fill="none"/><path d="M6.8 11.5 H14.3 M11.5 8.8 L14.3 11.5 L11.5 14.2" stroke="#2b2b2b" stroke-width="3" fill="none"/><path d="M6.8 11.5 H14.3 M11.5 8.8 L14.3 11.5 L11.5 14.2" stroke="#e8e8e8" stroke-width="1.2" fill="none"/></svg><span class="cd"><span class="k">private </span>StringRedisTemplate <span class="fi">stringRedisTemplate</span><span class="k">;</span></span></div>
<div class="ln" style="top:774px"><span class="no">78</span><span class="cd"></span></div>
<div class="ln cur" style="top:796px"><span class="no">79</span><svg class="fa" width="8" height="10" viewBox="0 0 8 10"><path d="M1.9 2.1 L5.6 5.5 L1.9 8.9" fill="none" stroke="#70747b" stroke-width="1.25"/></svg><span class="cd"><span class="fd">/** <span class="z">生成序号，使用当前日期，格式为</span> {PREFIX} + yyyyMMdd + 6 <span class="z">位自增</span> ...*/</span></span></div>
<div class="ln" style="top:818px"><span class="no">86</span><span class="cd"><span class="k">public </span>String <span class="m">generate</span>(String prefix) {</span></div>
<div class="ln" style="top:840px"><span class="no">87</span><span class="cd">    <span class="c">// <span class="z">递增序号</span></span></span></div>
<div class="ln" style="top:862px"><span class="no">88</span><span class="cd">    String noPrefix = prefix + DateUtil.<i>format</i>(LocalDateTime.<i>now</i>()<span class="k">,</span> DatePattern.<span class="f">PURE_DATE_PATTERN</span>)<span class="k">;</span></span></div>
<div class="ln" style="top:884px"><span class="no">89</span><span class="cd">    String key = RedisKeyConstants.<span class="f">NO</span> + noPrefix<span class="k">;</span></span></div>
<div class="ln" style="top:906px"><span class="no">90</span><span class="cd">    Long no = <span class="fi">stringRedisTemplate</span>.opsForValue().increment(key)<span class="k">;</span></span></div>
<div class="ln" style="top:928px"><span class="no">91</span><span class="cd">    <span class="c">// <span class="z">设置过期时间</span></span></span></div>
<div class="ln" style="top:950px"><span class="no">92</span><span class="cd">    <span class="fi">stringRedisTemplate</span>.expire(key<span class="k">,</span> Duration.<i>ofDays</i>(<span class="n">1L</span>))<span class="k">;</span></span></div>
<div class="ln" style="top:972px"><span class="no">93</span><span class="cd">    <span class="k">return </span>noPrefix + String.<i>format</i>(<span class="s">"%06d"</span><span class="k">,</span> no)<span class="k">;</span></span></div>
<div class="ln" style="top:994px"><span class="no">94</span><span class="cd">}</span></div>
 <div class="ig"></div>
 </div>
 <div id="gsep"></div>
 <div id="tabbar">
  <div id="tab"><svg class="ci" width="16" height="16" viewBox="0 0 16 16"><use href="#i-C"/></svg><span>ErpNoRedisDAO.java</span><svg class="x" width="10" height="10" viewBox="0 0 10 10"><path d="M1.6 1.6 L8.4 8.4 M8.4 1.6 L1.6 8.4" stroke="#7b8186" stroke-width="1"/></svg><div class="ul"></div></div>
 </div>
</div>

<div id="bottom"></div>
<div id="ledge"></div>

<svg id="boxes" width="1359" height="1016" viewBox="0 0 1359 1016">
 <rect x="484.15" y="67.75" width="706" height="49.2" fill="none" stroke="#ff3f7d" stroke-width="3.500"/>
 <rect x="217.6" y="584.05" width="159.15" height="30.2" fill="none" stroke="#ff3f7d" stroke-width="3.5"/>
 <rect x="519.25" y="790.65" width="813.8" height="224.7" fill="none" stroke="#ff3f7d" stroke-width="3.500"/>
</svg>
</body>
</html>
